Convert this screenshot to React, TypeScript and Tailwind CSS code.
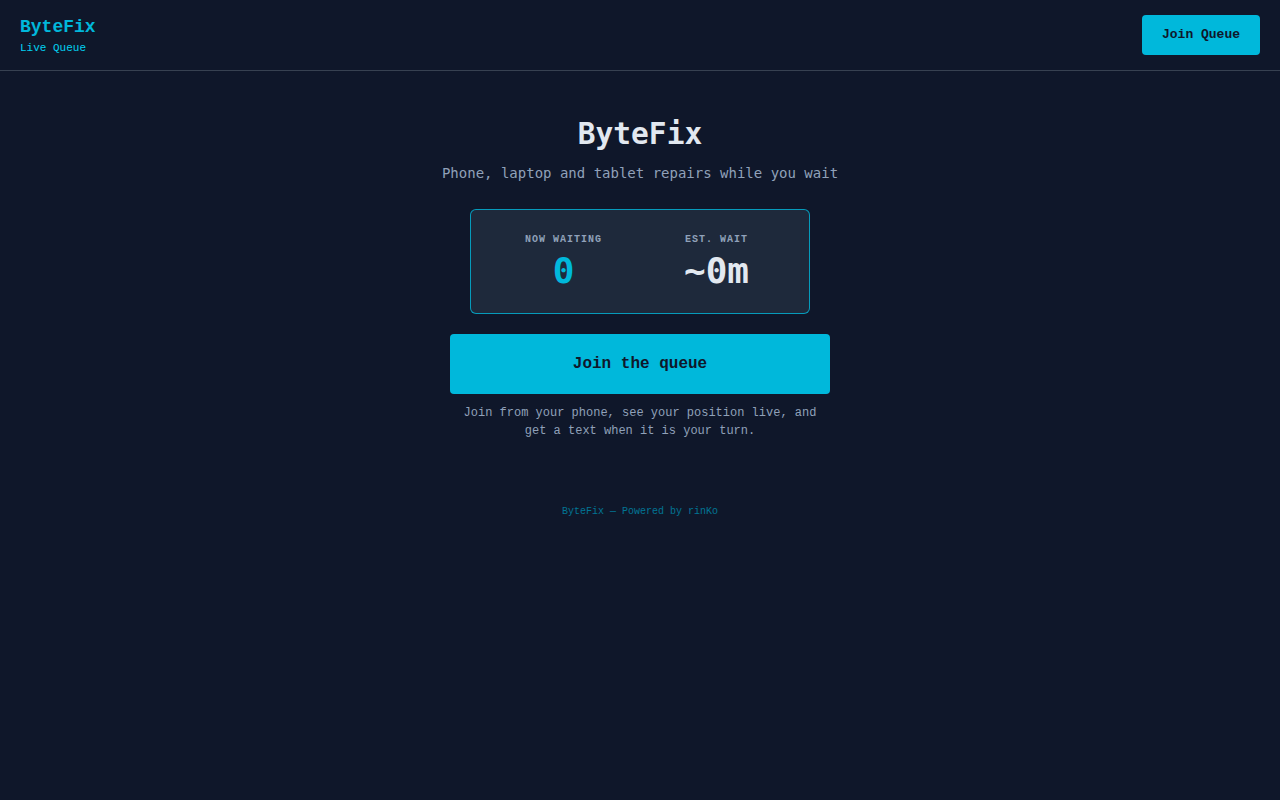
export default function App() {
  const mono = "font-['Liberation_Mono',monospace]";
  const dejavu = "font-['DejaVu_Sans_Mono',monospace]";

  return (
    <div className={`min-h-screen bg-[#0f172a] text-slate-200 ${mono}`}>
      {/* Header */}
      <header className="h-[71px] border-b border-[#374151] px-5 flex items-center justify-between">
        <div className="flex flex-col">
          <span className="text-lg font-bold leading-6 text-cyan-500">ByteFix</span>
          <span className="text-[11px] leading-4 mt-px text-cyan-400">Live Queue</span>
        </div>
        <button className="h-10 px-5 rounded bg-cyan-500 text-[13px] font-bold text-slate-900">
          Join Queue
        </button>
      </header>

      {/* Main */}
      <main className="flex flex-col items-center pt-11">
        <h1 className={`text-[29.5px] leading-[38px] font-bold text-slate-200 ${dejavu}`}>ByteFix</h1>
        <p className={`mt-[10px] text-sm leading-5 text-slate-400 ${dejavu}`}>
          Phone, laptop and tablet repairs while you wait
        </p>

        <div className="mt-[26px] w-[340px] rounded-md border border-cyan-500/80 bg-[#1e293b] px-6 pt-[22px] pb-[22px] grid grid-cols-2 gap-4">
          <div className="flex flex-col items-center">
            <span className="text-[10px] leading-[15px] font-bold tracking-[0.1em] text-slate-400">NOW WAITING</span>
            <span className={`mt-1 text-4xl leading-10 font-bold text-cyan-500 ${dejavu}`}>0</span>
          </div>
          <div className="flex flex-col items-center">
            <span className="text-[10px] leading-[15px] font-bold tracking-[0.1em] text-slate-400">EST. WAIT</span>
            <span className={`mt-1 text-4xl leading-10 font-bold text-slate-200 ${dejavu}`}>~0m</span>
          </div>
        </div>

        <button className="mt-5 w-[380px] h-[60px] rounded bg-cyan-500 text-base font-bold text-slate-900">
          Join the queue
        </button>
        <p className="mt-[10px] w-[380px] text-center text-xs leading-[18px] text-slate-400">
          Join from your phone, see your position live, and get a text when it is your turn.
        </p>

        <footer className="mt-16 text-[10px] leading-[15px] text-cyan-700">
          ByteFix — Powered by rinKo
        </footer>
      </main>
    </div>
  );
}
